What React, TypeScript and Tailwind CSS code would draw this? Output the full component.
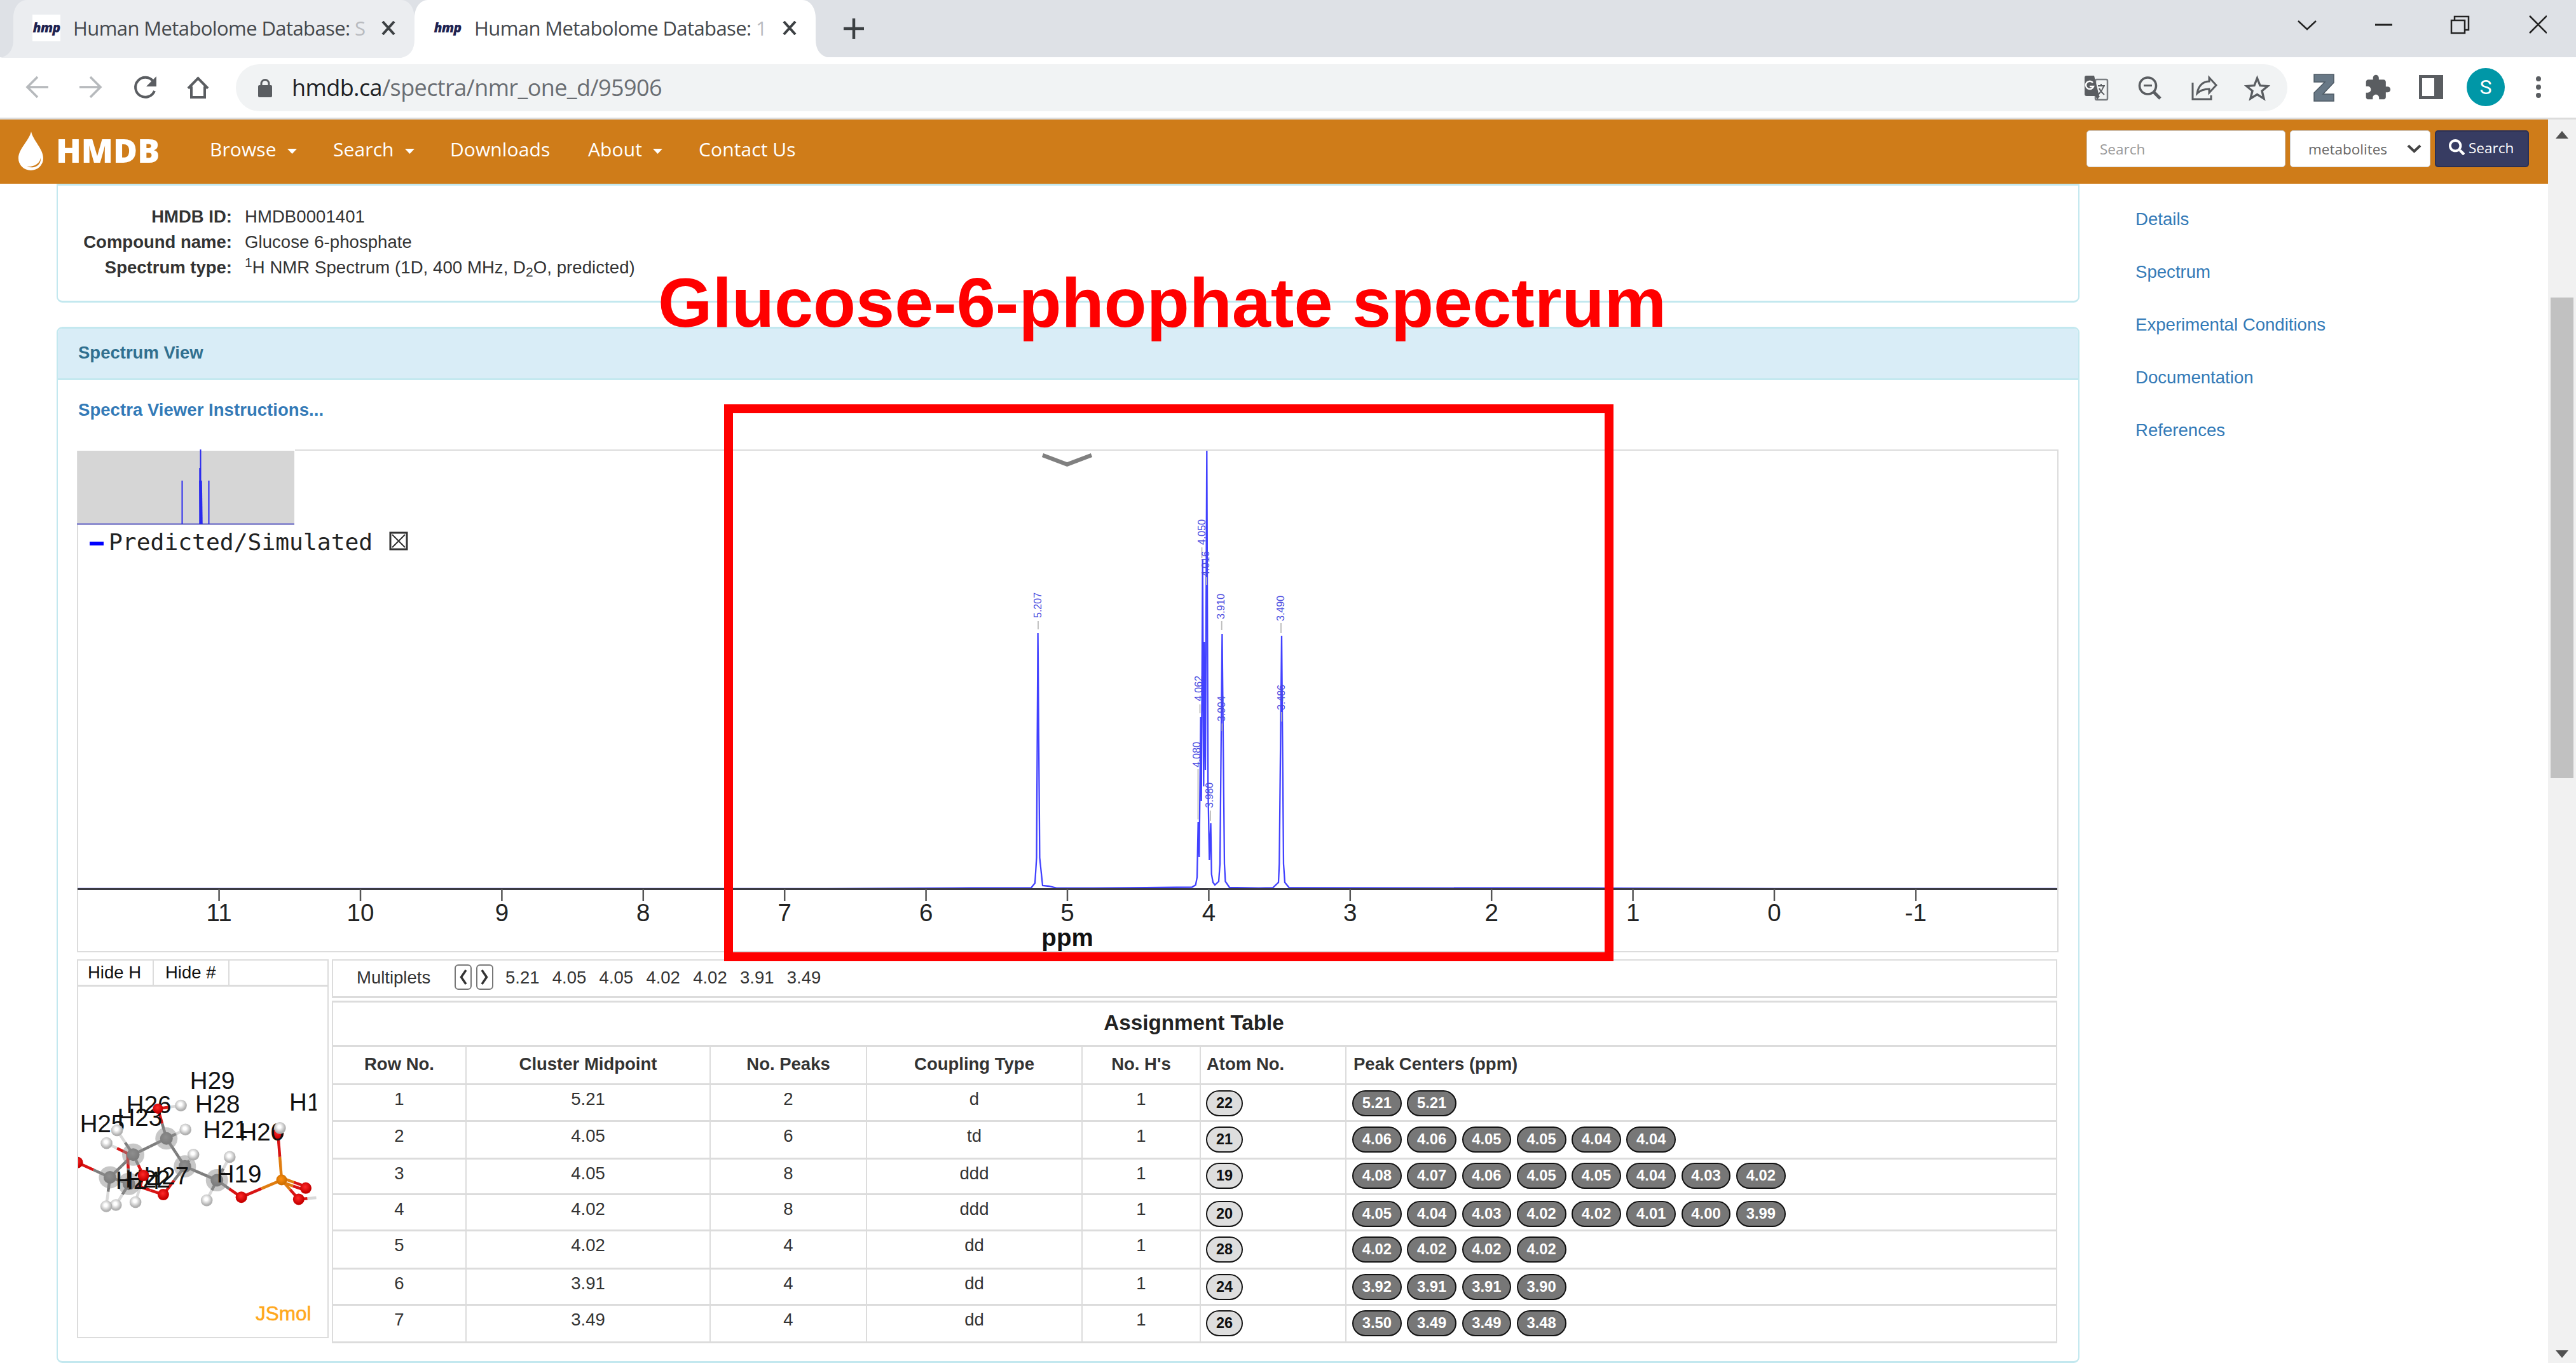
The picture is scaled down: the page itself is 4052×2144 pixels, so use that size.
import React from "react";
import { FaSearch } from "react-icons/fa";
import { MdExtension } from "react-icons/md";

/* ---------- browser chrome ---------- */

function TabShape({ fill }: { fill: string }) {
  return (
    <svg className="absolute -left-[21px] top-0" width="673" height="91" viewBox="0 0 673 91">
      <path d="M0 91C14 88 21 78 21 62V28C21 12 30 0 42 0H631C643 0 652 12 652 28V62C652 78 659 88 673 91Z" fill={fill} />
    </svg>
  );
}

function Tab({ fill, last, boxed }: { fill: string; last: string; boxed?: boolean }) {
  return (
    <div className="relative h-[90px] w-[631px]">
      <TabShape fill={fill} />
      <div className="relative flex h-[88px] items-center">
        <div
          className={
            "ml-[30px] flex h-[42px] w-[44px] items-center justify-center text-[21px] font-extrabold italic tracking-[-0.8px] text-[#1f2350] " +
            (boxed ? "bg-white" : "")
          }
        >
          hmp
        </div>
        <div className="ml-[20px] w-[468px] overflow-hidden whitespace-nowrap text-[31px] leading-[86px] tracking-[-0.6px] text-[#45484c]">
          Human Metabolome Database: <span className="text-[#b9bbbf]">{last}</span>
        </div>
        <svg className="ml-[17px]" width="22" height="22" viewBox="0 0 22 22">
          <path d="M2 1L20 21M20 1L2 21" stroke="#3c4043" strokeWidth="4" />
        </svg>
      </div>
    </div>
  );
}

function TabStrip() {
  return (
    <div className="flex h-[90px] bg-[#dee1e6]">
      <div className="ml-[21px] flex">
        <Tab fill="#ebedf0" last="S" boxed />
        <Tab fill="#ffffff" last="1" />
      </div>
      <svg className="ml-[43px] mt-[28px]" width="34" height="34" viewBox="0 0 34 34">
        <path d="M17 1V33M1 17H33" stroke="#3c4043" strokeWidth="4.5" />
      </svg>
      <svg className="ml-auto mr-[46px] mt-[24px]" width="394" height="30" viewBox="0 0 394 30">
        <g fill="none" stroke="#222" strokeWidth="2.5">
          <path d="M3 9L17 22L31 9" />
          <path d="M124 15H151" strokeWidth="3" />
          <path d="M244 8H265V28H244Z M249 8V2H271V23H265" />
          <path d="M367 1L394 28M394 1L367 28" />
        </g>
      </svg>
    </div>
  );
}

function Toolbar() {
  return (
    <div className="flex h-[98px] border-b-[3px] border-[#dcdcdc] bg-white">
      <svg className="ml-[40px] mt-[28px]" width="292" height="40" viewBox="40 118 292 40">
        <g fill="none" strokeWidth="3.6">
          <path d="M76 137H43M59 121L43 137L59 153" stroke="#b6b9bc" />
          <path d="M125 137H158M142 121L158 137L142 153" stroke="#b6b9bc" />
          <path d="M241 128A15.5 15.5 0 1 0 243 143" stroke="#5a5d61" strokeWidth="4" />
          <path d="M246 120V136H230Z" fill="#5a5d61" />
          <path d="M296 139L311.500 123L327 139M301 136V153H322V136" stroke="#5a5d61" strokeWidth="4" />
        </g>
      </svg>
      <div className="ml-[39px] mt-[11px] flex h-[74px] w-[3227px] rounded-full bg-[#f1f3f4]">
        <svg className="ml-[35px] mt-[23px]" width="22" height="30" viewBox="0 0 22 30">
          <rect x="0" y="10" width="22" height="19" rx="2" fill="#5a5d61" />
          <path d="M5 11V7.500A6 6 0 0 1 17 7.500V11" fill="none" stroke="#5a5d61" strokeWidth="3" />
        </svg>
        <div className="ml-[31px] whitespace-nowrap text-[36px] leading-[74px] tracking-[-0.6px] text-[#6a6e73]">
          <span className="text-[#202124]">hmdb.ca</span>/spectra/nmr_one_d/95906
        </div>
        <svg className="ml-auto mr-[25px] mt-[16px]" width="298" height="44" viewBox="3275 117 298 44">
          <rect x="3296" y="125" width="19" height="32" rx="2" fill="none" stroke="#7a7d81" strokeWidth="2.5" />
          <path d="M3282 119H3294L3302 151H3282Q3279 151 3279 148V122Q3279 119 3282 119Z" fill="#5a5d61" />
          <path d="M3296 151H3303L3299 157Z" fill="#5a5d61" />
          <path d="M3292 130A6.200 6.200 0 1 0 3293 136H3287" fill="none" stroke="#fff" strokeWidth="2.5" />
          <path d="M3300 135H3311M3305 132V136M3309 136Q3306 144 3300 149M3302 139Q3305 145 3310 149" fill="none" stroke="#5a5d61" strokeWidth="2" />
          <g fill="none" stroke="#5a5d61" strokeWidth="3.600">
            <circle cx="3378.500" cy="135" r="13" />
            <path d="M3388 145L3398 155" strokeWidth="5" />
            <path d="M3372 134.500H3385" strokeWidth="3" />
            <path d="M3449 130V156H3478V150" strokeWidth="3" />
            <path d="M3456 147C3458 134 3466 128 3475 128V122L3486 134L3475 146V140C3466 140 3461 142 3456 147Z" strokeWidth="3" />
            <path d="M3550.500 123L3555 134.500L3567 135.500L3558 143L3561 155L3550.500 148.500L3540 155L3543 143L3534 135.500L3546 134.500Z" strokeWidth="3.400" />
          </g>
        </svg>
      </div>
      <svg className="ml-[41px] mt-[25px]" width="34" height="48" viewBox="0 0 34 48">
        <path d="M1 2H32V15L15 33H32V44H1V31L18 14H1Z" fill="#687886" stroke="#4f5b66" strokeWidth="1.500" />
      </svg>
      <MdExtension className="ml-[45px] mt-[26px] text-[44px] text-[#5a5d61]" />
      <svg className="ml-[43px] mt-[28px]" width="38" height="38" viewBox="0 0 38 38">
        <path d="M0 0H38V38H0ZM5 5V33H24V5Z" fill="#5a5d61" fillRule="evenodd" />
      </svg>
      <div className="ml-[37px] mt-[17px] flex h-[60px] w-[60px] items-center justify-center rounded-full bg-[#0097a7] font-['Roboto'] text-[32px] text-white">
        S
      </div>
      <svg className="ml-[47px] mt-[28px]" width="12" height="38" viewBox="0 0 12 38">
        <g fill="#5a5d61">
          <circle cx="6" cy="6" r="4" />
          <circle cx="6" cy="19" r="4" />
          <circle cx="6" cy="32" r="4" />
        </g>
      </svg>
    </div>
  );
}

/* ---------- site navigation ---------- */

function Caret() {
  return (
    <svg className="ml-[17px] mt-[5px]" width="15" height="8" viewBox="0 0 15 8">
      <path d="M0 0H15L7.500 8Z" fill="#fff" />
    </svg>
  );
}

function NavBar() {
  return (
    <div className="flex h-[101px] bg-[#cf7c19] text-white">
      <svg className="ml-[28px] mt-[18px]" width="42" height="63" viewBox="0 0 42 63">
        <path d="M21 1C24 15 40 28 40 43A19.500 19 0 0 1 1 43C1 28 18 15 21 1Z" fill="#fff" />
        <path d="M36 42C35 51 26 57 14 56C25 60 37 55 36 42Z" fill="#cf7c19" />
      </svg>
      <div className="ml-[18px] w-[242px] text-[52px] font-extrabold leading-[95px]">HMDB</div>
      <nav className="flex h-[94px] text-[30px] leading-[94px] tracking-[0.1px]">
        <div className="flex w-[194px] items-center">Browse<Caret /></div>
        <div className="flex w-[184px] items-center">Search<Caret /></div>
        <div className="w-[217px]">Downloads</div>
        <div className="flex w-[174px] items-center">About<Caret /></div>
        <div>Contact Us</div>
      </nav>
      <div className="ml-auto mr-[30px] mt-[17px] flex text-[22.5px] leading-[57px]">
        <div className="h-[58px] w-[313px] rounded-[5px] border border-[#ccc] bg-white pl-[20px] text-[#999]">Search</div>
        <div className="ml-[7px] flex h-[58px] w-[221px] items-center rounded-[5px] border border-[#ccc] bg-white pl-[28px] text-[#666]">
          metabolites
          <svg className="ml-auto mr-[13px]" width="23" height="14" viewBox="0 0 23 14">
            <path d="M2 2L11.500 11L21 2" fill="none" stroke="#444" strokeWidth="4" />
          </svg>
        </div>
        <div className="ml-[7px] flex h-[58px] w-[148px] rounded-[5px] border-2 border-[#2b3054] bg-[#373c62] leading-[51px]">
          <FaSearch className="ml-[20px] mt-[12px] text-[25px]" />
          <span className="ml-[6px]">Search</span>
        </div>
      </div>
    </div>
  );
}

function ScrollBar() {
  return (
    <div className="flex w-[44px] flex-col items-center bg-[#f1f1f1]">
      <svg className="mt-[18px]" width="20" height="12" viewBox="0 0 20 12">
        <path d="M0 12H20L10 0Z" fill="#505050" />
      </svg>
      <div className="mt-[250px] h-[756px] w-[36px] bg-[#c1c1c1]" />
      <svg className="mb-[8px] mt-auto" width="20" height="12" viewBox="0 0 20 12">
        <path d="M0 0H20L10 12Z" fill="#505050" />
      </svg>
    </div>
  );
}

/* ---------- spectrum ---------- */

const ticks = [11, 10, 9, 8, 7, 6, 5, 4, 3, 2, 1, 0, -1];

const peakLabels = [
  { t: "5.207", x: 1638, y: 972, l: [1633, 977, 990] },
  { t: "4.050", x: 1895.5, y: 857, l: [1890.5, 861, 878] },
  { t: "4.016", x: 1901.5, y: 907, l: [1898, 908, 920] },
  { t: "3.910", x: 1926, y: 974, l: [1921.7, 977, 991] },
  { t: "3.490", x: 2020, y: 977, l: [2015, 980, 996] },
  { t: "4.062", x: 1890.5, y: 1103, l: [1887.5, 1108, 1122] },
  { t: "4.080", x: 1888, y: 1207, l: [1884.5, 1210, 1289] },
  { t: "3.980", x: 1908, y: 1271, l: [1904, 1275, 1291] },
  { t: "3.904", x: 1926.5, y: 1135, l: [1922.5, 1138, 1150] },
  { t: "3.486", x: 2020.5, y: 1117, l: [2016, 1120, 1135] },
];

const curve =
  "M123 1398H1300L1500 1396.800L1622 1396.500L1628 1389L1630.500 1349L1632.600 996L1635.400 1349L1640 1393L1650 1394L1663 1397H1720L1875 1395.500L1880.700 1392L1883 1380L1884.700 1293L1886.300 1348L1888.700 1128L1889.700 1260L1891.700 880L1893.300 1237L1894.300 1010L1896 1211L1898.300 709L1900.200 1237L1902.300 1353L1904.500 1295L1905.700 1375L1908 1388L1911 1392L1917 1386.500L1919 1359L1922.400 997L1926 1359L1927.500 1386.500L1934 1396L1980 1397L2002 1396.500L2011 1388L2012.300 1359L2016 1000L2019 1359L2021 1388L2028 1396.500L2500 1397L2800 1398H3235";

function SpectrumChart() {
  return (
    <div className="mt-[42px] h-[791px] w-[3117px] border-2 border-[#dcdcdc]">
      <svg className="overflow-visible" width="3113" height="787" viewBox="123 709 3113 787">
        <rect x="121" y="706" width="343" height="3" fill="#fff" />
        <rect x="122" y="709" width="341" height="115" fill="#d6d6d6" />
        <path d="M121 824.500H463" stroke="#8e8ecf" strokeWidth="3" />
        <g stroke="#2a2aee" fill="none" strokeWidth="2">
          <path d="M286.500 756V824M315.500 707V824M328.500 756V824" />
          <path d="M314 736V824" strokeWidth="1.500" />
          <path d="M315.500 756L316.500 824" strokeWidth="4.500" />
        </g>
        <path d="M141 855H163" stroke="#00f" strokeWidth="6" />
        <text x="171" y="865" fontSize="36.300" fill="#222" className="font-['DejaVu_Sans_Mono']">
          Predicted/Simulated
        </text>
        <rect x="614" y="838" width="26" height="26" fill="none" stroke="#333" strokeWidth="3" />
        <path d="M617 841L637 861M637 841L617 861" stroke="#333" strokeWidth="2" />
        <path d="M1640 716L1678.500 730.500L1717 716" fill="none" stroke="#808080" strokeWidth="6.500" />
        <path d={curve} fill="none" stroke="#2020ff" strokeWidth="2.300" opacity="0.850" />
        <path d="M122 1398.500H3236" stroke="#3c3c44" strokeWidth="3" />
        {ticks.map((t) => {
          const x = 1679 + (5 - t) * 222.4;
          return (
            <g key={t}>
              <path d={`M${x} 1398V1417`} stroke="#555" strokeWidth="2.500" />
              <text x={x} y="1448.500" fontSize="38.500" textAnchor="middle" fill="#222">
                {t}
              </text>
            </g>
          );
        })}
        <text x="1679" y="1488" fontSize="38.500" fontWeight="bold" textAnchor="middle" fill="#111">
          ppm
        </text>
        {peakLabels.map((p) => (
          <g key={p.t}>
            <path d={`M${p.l[0]} ${p.l[1]}V${p.l[2]}`} stroke="#bbb" strokeWidth="1.800" />
            <text transform={`translate(${p.x} ${p.y}) rotate(-90)`} fontSize="16" fill="#4a4ae0">
              {p.t}
            </text>
          </g>
        ))}
      </svg>
    </div>
  );
}

/* ---------- molecule viewer ---------- */

type P = [number, number];
const mx = (v: number) => v / 2.24 + 60;
const my = (v: number) => v / 2.435 + 1500;

const H: P[] = [[503, 582], [519, 674], [241, 726], [547, 770], [675, 779], [594, 945], [343, 952], [274, 963], [240, 968]];
const C: P[] = [[320, 882], [253, 857], [335, 770], [452, 708], [517, 815], [630, 868]];
const O: P[] = [[441, 923], [716, 933], [845, 690], [943, 898], [918, 941], [138, 800]];

const G = "#7d7d7d";
const R = "#d81414";
const W = "#d9d9d9";
const OR = "#e07d10";
const bonds: [P, P, string, string][] = [
  [[138, 800], [253, 857], R, G],
  [[253, 857], [335, 770], G, G],
  [[253, 857], [320, 882], G, G],
  [[253, 857], [240, 968], G, W],
  [[320, 882], [274, 963], G, W],
  [[371, 850], [343, 952], R, W],
  [[335, 770], [371, 850], G, R],
  [[335, 770], [278, 677], G, W],
  [[315, 765], [320, 882], R, G],
  [[241, 726], [315, 765], W, R],
  [[335, 770], [452, 708], G, G],
  [[452, 708], [422, 594], G, R],
  [[422, 594], [503, 582], R, W],
  [[452, 708], [519, 674], G, W],
  [[452, 708], [517, 815], G, G],
  [[517, 815], [547, 770], G, W],
  [[517, 815], [441, 923], G, R],
  [[350, 890], [441, 923], R, R],
  [[517, 815], [630, 868], G, G],
  [[630, 868], [675, 779], G, W],
  [[630, 868], [594, 945], G, W],
  [[630, 868], [716, 933], G, R],
  [[716, 933], [858, 867], R, OR],
  [[858, 867], [845, 690], OR, R],
  [[860, 860], [943, 892], OR, R],
  [[856, 874], [940, 906], OR, R],
  [[858, 867], [918, 941], OR, R],
  [[918, 941], [980, 935], R, W],
];

const atomLabels: [string, number, number][] = [
  ["H29", 535, 518],
  ["H28", 553, 608],
  ["H1", 885, 602],
  ["H26", 311, 612],
  ["H25", 147, 685],
  ["H23", 279, 661],
  ["H21", 581, 706],
  ["H20", 709, 715],
  ["H24", 273, 900],
  ["H22", 307, 897],
  ["H27", 373, 883],
  ["H19", 629, 877],
];

function Ball({ p, kind, r }: { p: P; kind: string; r: number }) {
  return <circle cx={mx(p[0])} cy={my(p[1])} r={r} fill={kind} />;
}

function Molecule() {
  return (
    <svg width="391" height="551" viewBox="123 1552 391 551">
      <defs>
        <radialGradient id="h" cx="0.45" cy="0.4">
          <stop offset="0.25" stopColor="#ffffff" />
          <stop offset="1" stopColor="#b0b0b0" />
        </radialGradient>
        <radialGradient id="c" cx="0.45" cy="0.4">
          <stop offset="0" stopColor="#8c8c8c" />
          <stop offset="1" stopColor="#6a6a6a" />
        </radialGradient>
        <radialGradient id="o" cx="0.45" cy="0.4">
          <stop offset="0" stopColor="#ff2a2a" />
          <stop offset="1" stopColor="#c80000" />
        </radialGradient>
        <radialGradient id="ph" cx="0.45" cy="0.4">
          <stop offset="0" stopColor="#ff9010" />
          <stop offset="1" stopColor="#d07000" />
        </radialGradient>
        <clipPath id="stage">
          <rect x="123" y="1552" width="375" height="551" />
        </clipPath>
      </defs>
      <g clipPath="url(#stage)">
        {bonds.map(([a, b, ca, cb], i) => {
          const x1 = mx(a[0]), y1 = my(a[1]), x2 = mx(b[0]), y2 = my(b[1]);
          const xm = (x1 + x2) / 2, ym = (y1 + y2) / 2;
          return (
            <g key={i} strokeWidth="4.500">
              <path d={`M${x1} ${y1}L${xm} ${ym}`} stroke={ca} />
              <path d={`M${xm} ${ym}L${x2} ${y2}`} stroke={cb} />
            </g>
          );
        })}
        {C.map((p, i) => (
          <g key={i}>
            <Ball p={p} kind="url(#c)" r={10} />
            <circle cx={mx(p[0])} cy={my(p[1])} r="17.500" fill="#8f8f8f" opacity="0.500" />
          </g>
        ))}
        {O.map((p, i) => <Ball key={i} p={p} kind="url(#o)" r={9} />)}
        {H.map((p, i) => <Ball key={i} p={p} kind="url(#h)" r={9.3} />)}
        <Ball p={[858, 867]} kind="url(#ph)" r={8.5} />
        {atomLabels.map(([t, x, y]) => (
          <text key={t} x={mx(x)} y={my(y)} fontSize="38.500" fill="#111">
            {t}
          </text>
        ))}
        <Ball p={[422, 594]} kind="url(#o)" r={8} />
        <Ball p={[371, 850]} kind="url(#o)" r={9} />
        <Ball p={[278, 677]} kind="url(#h)" r={9.3} />
        <Ball p={[852, 668]} kind="url(#h)" r={9.3} />
      </g>
      <text x="402" y="2077" fontSize="31.500" fill="#ffa81c" stroke="#ffa81c" strokeWidth="0.600">
        JSmol
      </text>
    </svg>
  );
}

function MoleculeViewer() {
  return (
    <div className="h-[596px] w-[396px] border-2 border-[#dcdcdc]">
      <div className="flex h-[41px] border-b-[3px] border-[#dcdcdc] text-[27.5px] leading-[37px] text-[#111]">
        <div className="w-[119px] border-r-2 border-[#dcdcdc] pl-[15px]">Hide H</div>
        <div className="w-[119px] border-r-2 border-[#dcdcdc] pl-[18px]">Hide #</div>
      </div>
      <Molecule />
    </div>
  );
}

/* ---------- assignment table ---------- */

const rows = [
  { h: "h-[58px]", p: "pt-[8px]", mid: "5.21", n: "2", type: "d", atom: "22", c: ["5.21", "5.21"] },
  { h: "h-[59px]", p: "pt-[7px]", mid: "4.05", n: "6", type: "td", atom: "21", c: ["4.06", "4.06", "4.05", "4.05", "4.04", "4.04"] },
  { h: "h-[56px]", p: "pt-[5px]", mid: "4.05", n: "8", type: "ddd", atom: "19", c: ["4.08", "4.07", "4.06", "4.05", "4.05", "4.04", "4.03", "4.02"] },
  { h: "h-[57px]", p: "pt-[9px]", mid: "4.02", n: "8", type: "ddd", atom: "20", c: ["4.05", "4.04", "4.03", "4.02", "4.02", "4.01", "4.00", "3.99"] },
  { h: "h-[60px]", p: "pt-[8px]", mid: "4.02", n: "4", type: "dd", atom: "28", c: ["4.02", "4.02", "4.02", "4.02"] },
  { h: "h-[57px]", p: "pt-[7px]", mid: "3.91", n: "4", type: "dd", atom: "24", c: ["3.92", "3.91", "3.91", "3.90"] },
  { h: "h-[59px]", p: "pt-[7px]", mid: "3.49", n: "4", type: "dd", atom: "26", c: ["3.50", "3.49", "3.49", "3.48"] },
];

const grid = "grid grid-cols-[210px_384px_246px_339px_186px_229px_1fr] border-b-[3px] border-[#dcdcdc] ";
const cell = "border-r-2 border-[#dcdcdc] text-center";

function AssignmentTable() {
  return (
    <div className="mt-[4px] w-[2714px] border-x-2 border-t-[3px] border-[#dcdcdc] leading-9">
      <div className="h-[70px] border-b-[3px] border-[#dcdcdc] pr-[2px] pt-[12px] text-center text-[33.2px] font-bold leading-10 text-[#222]">
        Assignment Table
      </div>
      <div className={grid + "h-[60px] font-bold *:pt-[9px]"}>
        <div className={cell}>Row No.</div>
        <div className={cell}>Cluster Midpoint</div>
        <div className={cell}>No. Peaks</div>
        <div className={cell}>Coupling Type</div>
        <div className={cell}>No. H's</div>
        <div className="border-r-2 border-[#dcdcdc] pl-[9px]">Atom No.</div>
        <div className="pl-[11px]">Peak Centers (ppm)</div>
      </div>
      {rows.map((r, i) => (
        <div key={i} className={grid + r.h}>
          <div className={cell + " pt-[4px]"}>{i + 1}</div>
          <div className={cell + " pt-[4px]"}>{r.mid}</div>
          <div className={cell + " pt-[4px]"}>{r.n}</div>
          <div className={cell + " pt-[4px]"}>{r.type}</div>
          <div className={cell + " pt-[4px]"}>1</div>
          <div className={"border-r-2 border-[#dcdcdc] pl-[8px] " + r.p}>
            <div className="h-[41px] w-[58px] rounded-full border-[2.5px] border-[#111] bg-[#dedede] text-center text-[23.5px] font-bold leading-[36px] text-[#111]">
              {r.atom}
            </div>
          </div>
          <div className={"flex gap-[8.6px] pl-[9px] " + r.p}>
            {r.c.map((v, k) => (
              <div
                key={k}
                className="h-[41px] w-[77.700px] rounded-full border-[2.5px] border-[#111] bg-[#777] text-center text-[23.8px] font-bold leading-[36px] text-white"
              >
                {v}
              </div>
            ))}
          </div>
        </div>
      ))}
    </div>
  );
}

function StepButton({ d }: { d: string }) {
  return (
    <div className="flex h-[40px] w-[27px] items-center justify-center rounded-[6px] border-2 border-[#777]">
      <svg width="13" height="24" viewBox="0 0 13 24">
        <path d={d} fill="none" stroke="#333" strokeWidth="3.500" />
      </svg>
    </div>
  );
}

function MultipletsBar() {
  return (
    <div className="flex h-[61px] w-[2714px] border-2 border-b-[3px] border-[#dcdcdc] leading-[54px]">
      <div className="ml-[37px] w-[154px]">Multiplets</div>
      <div className="mt-[6px] flex gap-[7px]">
        <StepButton d="M11 1L3.500 12L11 23" />
        <StepButton d="M2 1L9.500 12L2 23" />
      </div>
      <div className="ml-[19px] flex">
        {["5.21", "4.05", "4.05", "4.02", "4.02", "3.91", "3.49"].map((v, i) => (
          <div key={i} className="w-[73.8px]">{v}</div>
        ))}
      </div>
    </div>
  );
}

/* ---------- page ---------- */

function InfoRow({ label, children }: { label: string; children: React.ReactNode }) {
  return (
    <div className="flex h-10 whitespace-nowrap leading-10">
      <div className="w-[274px] text-right font-bold">{label}</div>
      <div className="ml-[20px] tracking-[0.08px]">{children}</div>
    </div>
  );
}

function MainColumn() {
  return (
    <main className="ml-[89px] w-[3182px] text-[27.5px] text-[#333]">
      <section className="h-[187px] rounded-b-[9px] border-2 border-y-[3px] border-[#c3e8ef] pt-[29px]">
        <InfoRow label="HMDB ID:">HMDB0001401</InfoRow>
        <InfoRow label="Compound name:">Glucose 6-phosphate</InfoRow>
        <InfoRow label="Spectrum type:">
          <sup className="text-[21px] leading-none">1</sup>H NMR Spectrum (1D, 400 MHz, D<sub className="text-[21px] leading-none">2</sub>O, predicted)
        </InfoRow>
      </section>
      <section className="mt-[38px] h-[1630px] rounded-[9px] border-2 border-y-[3px] border-[#c3e8ef]">
        <div className="h-[81px] rounded-t-[7px] border-b-[3px] border-[#c3e8ef] bg-[#d9edf7] pl-[32px] font-bold leading-[75px] text-[#31708f]">
          Spectrum View
        </div>
        <div className="pl-[30px] pt-[27px]">
          <div className="pl-[2px] font-bold leading-10 tracking-[0.05px] text-[#337ab7]">Spectra Viewer Instructions...</div>
          <SpectrumChart />
          <div className="mt-[11px] flex gap-[5px]">
            <MoleculeViewer />
            <div>
              <MultipletsBar />
              <AssignmentTable />
            </div>
          </div>
        </div>
      </section>
    </main>
  );
}

export default function App() {
  return (
    <div className="relative flex h-[2144px] w-[4052px] flex-col overflow-hidden bg-white font-['Open_Sans',sans-serif]">
      <TabStrip />
      <Toolbar />
      <div className="flex h-[1956px]">
        <div className="flex w-[4008px] flex-col">
          <NavBar />
          <div className="flex font-['Liberation_Sans',sans-serif]">
            <MainColumn />
            <aside className="ml-[88px] pt-[14px] text-[27.6px] leading-[83px] text-[#337ab7]">
              <div>Details</div>
              <div>Spectrum</div>
              <div>Experimental Conditions</div>
              <div>Documentation</div>
              <div>References</div>
            </aside>
          </div>
        </div>
        <ScrollBar />
      </div>
      <div className="absolute left-[1139px] top-[636px] h-[876px] w-[1399px] border-[14px] border-[#ff0000]" />
      <div className="absolute left-[1035px] top-[421px] whitespace-nowrap font-['Liberation_Sans',sans-serif] text-[109.8px] font-bold leading-[110px] text-[#ff0000]">
        Glucose-6-phophate spectrum
      </div>
    </div>
  );
}
